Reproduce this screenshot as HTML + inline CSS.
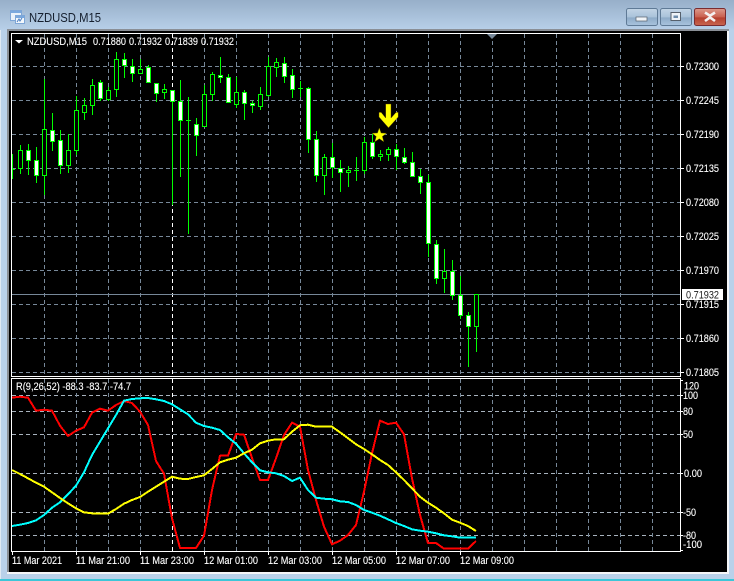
<!DOCTYPE html>
<html><head><meta charset="utf-8"><title>NZDUSD,M15</title>
<style>html,body{margin:0;padding:0;background:#b9d1ea;width:734px;height:581px;overflow:hidden}svg{display:block;position:absolute;left:0;top:0}text{font-family:"Liberation Sans",sans-serif;font-size:10.6px;fill:#fff;stroke:#fff;stroke-width:.12}</style></head>
<body>
<svg width="734" height="581" viewBox="0 0 734 581" xmlns="http://www.w3.org/2000/svg">
<defs>
<linearGradient id="tb" x1="0" y1="0" x2="0" y2="1"><stop offset="0" stop-color="#97afc9"/><stop offset="1" stop-color="#b8d0e9"/></linearGradient>
<linearGradient id="bb" x1="0" y1="0" x2="0" y2="1"><stop offset="0" stop-color="#c3d5e6"/><stop offset=".5" stop-color="#a9c2da"/><stop offset=".55" stop-color="#8eabc8"/><stop offset="1" stop-color="#a9c4de"/></linearGradient>
<linearGradient id="rb" x1="0" y1="0" x2="0" y2="1"><stop offset="0" stop-color="#dc9a8c"/><stop offset=".5" stop-color="#c9604f"/><stop offset=".55" stop-color="#b5402f"/><stop offset="1" stop-color="#c8654f"/></linearGradient>
</defs>
<rect width="734" height="581" fill="#b9d1ea"/>
<rect width="734" height="30" fill="url(#tb)"/>
<rect x="0" y="30" width="1" height="549" fill="#dfe9f3"/>
<rect x="0" y="579" width="734" height="2" fill="#3cc6d8"/>
<!-- title icon -->
<rect x="10.5" y="10.5" width="11" height="10" fill="#e8f1fa" stroke="#7ea6d6"/><rect x="11" y="11" width="10" height="2" fill="#79a8de"/>
<rect x="15.5" y="15.5" width="9" height="8" fill="#f4f8fc" stroke="#7ea6d6"/><rect x="16" y="16" width="8" height="2" fill="#79a8de"/>
<path d="M17 22l2-3 1 2 2-3" fill="none" stroke="#4c7fc0"/>
<text x="29" y="22" style="font-size:13px;fill:#16202f;stroke:none" textLength="72" lengthAdjust="spacingAndGlyphs">NZDUSD,M15</text>
<!-- buttons -->
<rect x="626.5" y="8.5" width="31" height="17" rx="2" fill="url(#bb)" stroke="#5f7a96"/>
<rect x="636" y="17" width="11" height="4" fill="#f0f4f8" stroke="#56606c" stroke-width=".7"/>
<rect x="660.5" y="8.5" width="31" height="17" rx="2" fill="url(#bb)" stroke="#5f7a96"/>
<rect x="671" y="12.5" width="9.5" height="8" fill="#eef3f8" stroke="#56606c"/><rect x="673.5" y="15.5" width="4.5" height="2.5" fill="#6d8cab"/>
<rect x="694.5" y="8.5" width="31" height="17" rx="2" fill="url(#rb)" stroke="#7a2c30"/>
<path d="M705 12.5l5 3.2 5-3.2M705 21l5-3.6 5 3.6" fill="none" stroke="#f4f1f1" stroke-width="2.6"/>
<!-- frame / black -->
<rect x="7" y="29" width="722" height="2" fill="#8a8f96"/>
<rect x="7" y="29" width="2" height="545" fill="#8a8f96"/>
<rect x="7" y="572" width="722" height="2" fill="#f4f6f8"/>
<rect x="727" y="31" width="2" height="543" fill="#f4f6f8"/>
<rect x="9" y="31" width="718" height="541" fill="#000"/>
<g shape-rendering="crispEdges">
<!-- main grid -->
<path d="M12 66.5H680M12 100.5H680M12 134.5H680M12 168.5H680M12 202.5H680M12 236.5H680M12 270.5H680M12 304.5H680M12 338.5H680M12 372.5H680" stroke="#778899" stroke-dasharray="4 3" fill="none"/>
<path d="M44.5 34V376M76.5 34V376M108.5 34V376M140.5 34V376M204.5 34V376M236.5 34V376M268.5 34V376M300.5 34V376M332.5 34V376M364.5 34V376M396.5 34V376M428.5 34V376M460.5 34V376M492.5 34V376M524.5 34V376M556.5 34V376M588.5 34V376M620.5 34V376M652.5 34V376" stroke="#778899" stroke-dasharray="4 3" fill="none"/>
<path d="M172.5 34V376" stroke="#fff" stroke-dasharray="4 3" fill="none"/>
<path d="M12 294.5H681" stroke="#778899" fill="none"/>
<!-- indicator grid -->
<path d="M12 395.5H680M12 411.5H680M12 434.5H680M12 473.5H680M12 512.5H680M12 535.5H680" stroke="#a7b2bd" stroke-dasharray="4 3" fill="none"/>
<path d="M44.5 379V551M76.5 379V551M108.5 379V551M140.5 379V551M204.5 379V551M236.5 379V551M268.5 379V551M300.5 379V551M332.5 379V551M364.5 379V551M396.5 379V551M428.5 379V551M460.5 379V551M492.5 379V551M524.5 379V551M556.5 379V551M588.5 379V551M620.5 379V551M652.5 379V551" stroke="#778899" stroke-dasharray="4 3" fill="none"/>
<path d="M172.5 379V551" stroke="#fff" stroke-dasharray="4 3" fill="none"/>
<!-- wicks -->
<path fill="none" stroke="#0f0" d="M12.5 154V179M20.5 145V174M28.5 144V175M36.5 147V183M44.5 79V195M52.5 113V151M60.5 130V174M68.5 134V173M76.5 96V155M84.5 98V120M92.5 79V115M100.5 80V101M108.5 87V101M116.5 52V97M124.5 53V78M132.5 59V82M140.5 59V74M148.5 65V83M156.5 83V102M164.5 84V99M172.5 90V205M180.5 80V177M188.5 97V234M196.5 118V156M204.5 85V127M212.5 72V101M220.5 57V83M228.5 74V103M236.5 77V108M244.5 90V120M252.5 101V113M260.5 87V110M268.5 57V97M276.5 58V77M284.5 57V83M292.5 69V98M300.5 81V97M308.5 87V153M316.5 131V182M324.5 154V195M332.5 143V178M340.5 160V192M348.5 166V187M356.5 157V181M364.5 137V174M372.5 134V159M380.5 150V161M388.5 147V161M396.5 144V170M404.5 148V164M412.5 152V177M420.5 169V194M428.5 175V257M436.5 240V284M444.5 249V293M452.5 260V300M460.5 276V319M468.5 312V367M476.5 294V352"/>
<!-- hollow bodies -->
<path fill="#000" stroke="#0f0" d="M18.5 150.5h4v18h-4zM42.5 129.5h4v46h-4zM66.5 150.5h4v15h-4zM74.5 110.5h4v40h-4zM82.5 105.5h4v7h-4zM90.5 85.5h4v20h-4zM106.5 90.5h4v9h-4zM114.5 59.5h4v30h-4zM138.5 69.5h4v4h-4zM162.5 89.5h4v3h-4zM202.5 94.5h4v32h-4zM210.5 74.5h4v20h-4zM234.5 92.5h4v12h-4zM258.5 94.5h4v12h-4zM266.5 66.5h4v29h-4zM274.5 62.5h4v5h-4zM322.5 157.5h4v18h-4zM346.5 170.5h4v2h-4zM362.5 142.5h4v28h-4zM378.5 154.5h4v2h-4zM386.5 149.5h4v5h-4zM442.5 271.5h4v7h-4zM474.5 294.5h4v32h-4z"/>
<!-- white bodies -->
<path fill="#fff" stroke="#0f0" d="M26.5 150.5h4v10h-4zM34.5 160.5h4v15h-4zM50.5 130.5h4v11h-4zM58.5 140.5h4v25h-4zM98.5 82.5h4v16h-4zM122.5 59.5h4v6h-4zM130.5 66.5h4v7h-4zM146.5 67.5h4v15h-4zM154.5 83.5h4v10h-4zM170.5 90.5h4v11h-4zM178.5 101.5h4v19h-4zM194.5 124.5h4v11h-4zM218.5 75.5h4v2h-4zM226.5 77.5h4v25h-4zM242.5 92.5h4v11h-4zM250.5 103.5h4v2h-4zM282.5 63.5h4v13h-4zM290.5 75.5h4v14h-4zM306.5 88.5h4v51h-4zM314.5 139.5h4v36h-4zM330.5 157.5h4v10h-4zM338.5 168.5h4v4h-4zM370.5 142.5h4v14h-4zM394.5 149.5h4v7h-4zM402.5 157.5h4v5h-4zM410.5 162.5h4v14h-4zM418.5 176.5h4v6h-4zM426.5 182.5h4v61h-4zM434.5 244.5h4v34h-4zM450.5 271.5h4v24h-4zM458.5 295.5h4v20h-4zM466.5 315.5h4v11h-4z"/>
<!-- doji -->
<path fill="none" stroke="#0f0" d="M12 169.5h3M186 120.5h5M298 88.5h5M354 170.5h5"/>
<!-- borders -->
<path fill="none" stroke="#fff" d="M11.5 33.5H680.5V376.5H11.5ZM11.5 378.5H680.5V551.5H11.5Z"/>
<!-- ticks -->
<path fill="none" stroke="#fff" d="M681 66.5h3M681 100.5h3M681 134.5h3M681 168.5h3M681 202.5h3M681 236.5h3M681 270.5h3M681 304.5h3M681 338.5h3M681 372.5h3M681 380.5h2M681 395.5h2M681 411.5h2M681 434.5h2M681 473.5h2M681 512.5h2M681 535.5h2M681 550.5h2M12.5 552v3M76.5 552v3M140.5 552v3M204.5 552v3M268.5 552v3M332.5 552v3M396.5 552v3M460.5 552v3"/>
</g>
<!-- triangles -->
<path d="M487 34h10l-5 5z" fill="#778899"/>
<path d="M15 40h8l-4 3.5z" fill="#fff"/>
<!-- indicator lines -->
<g fill="none" stroke-width="2" stroke-linejoin="round" shape-rendering="crispEdges">
<polyline stroke="#f00" points="12,397.7 20,396.7 28,397.7 36,410.7 44,409.7 52,410.7 60,425.7 68,436 76,430.7 84,427.3 92,412.7 100,408.7 108,410.7 116,405 124,401 132,403 140,411.7 148,425 156,461 164,473.7 172,518.3 180,548 188,548 196,548 204,535.7 212,490 220,455.7 228,455.7 236,434 244,434.7 252,458 260,480 268,480 276,458.3 284,435 292,422.7 300,426.7 308,470 316,500 324,526.7 332,544.3 340,540.7 348,535 356,525 364,491.7 372,453.3 380,420.7 388,424 396,422.7 404,434.3 412,478.3 420,515 428,543 436,543 444,548.7 452,548.7 460,548.7 468,548.7 476,541"/>
<polyline stroke="#0ff" points="12,526 20,524.7 28,523 36,520.3 44,515 52,507.7 60,502.3 68,494.3 76,485.7 84,472.3 92,455 100,441.7 108,428.3 116,415 124,400.7 132,399 140,398.3 148,398 156,399.3 164,401 172,404.3 180,409.3 188,414.3 196,422.7 204,426 212,427.7 220,430 228,437.3 236,443.7 244,453.3 252,462.3 260,470.3 268,472.3 276,473.3 284,476 292,481 300,477.7 308,490 316,497.7 324,498.7 332,499.3 340,501.3 348,502 356,505 364,510 372,512.7 380,515.7 388,519.3 396,523 404,526 412,529.3 420,530.7 428,531.7 436,533.3 444,535.3 452,536.3 460,537.7 468,537.7 476,537.7"/>
<polyline stroke="#ff0" points="12,470 20,474 28,478.3 36,482.7 44,486.7 52,492.3 60,498 68,503.3 76,508.3 84,512.3 92,513.3 100,513.7 108,513.7 116,509 124,503.7 132,500 140,497 148,491.7 156,486.7 164,481.7 172,476.7 180,478.7 188,479 196,477 204,475.3 212,469 220,462.3 228,459.7 236,457.7 244,453.3 252,449.7 260,443.3 268,440.7 276,439.3 284,439.3 292,431.7 300,425.3 308,424.7 316,426.7 324,426.7 332,426.7 340,432.3 348,438.3 356,444.3 364,449 372,454.3 380,460 388,465 396,472.3 404,480 412,488.3 420,496.7 428,502.7 436,507.7 444,513.3 452,519.7 460,522.7 468,526 476,531"/>
</g>
<!-- arrow and star -->
<path d="M385.7 104h5.3v14l5-5.6h2.2v4.6l-9.7 10.8-9.5-10.8v-4.6h2.2l4.5 5.6z" fill="#ff0" stroke="#5a3a00" stroke-width=".4"/>
<path d="M379.3 128l1.8 5 5.4.2-4.2 3.3 1.5 5.2-4.5-3-4.5 3 1.5-5.2-4.2-3.3 5.4-.2z" fill="#ff0" stroke="#6a5a00" stroke-width=".4"/>
<!-- chart labels -->
<text x="27" y="45" textLength="60" lengthAdjust="spacingAndGlyphs">NZDUSD,M15</text>
<text x="93" y="45" textLength="33" lengthAdjust="spacingAndGlyphs">0.71880</text>
<text x="129" y="45" textLength="33" lengthAdjust="spacingAndGlyphs">0.71932</text>
<text x="165" y="45" textLength="33" lengthAdjust="spacingAndGlyphs">0.71839</text>
<text x="201" y="45" textLength="33" lengthAdjust="spacingAndGlyphs">0.71932</text>
<text x="16" y="390" textLength="115" lengthAdjust="spacingAndGlyphs">R(9,26,52) -88.3 -83.7 -74.7</text>
<!-- price axis -->
<text x="686" y="70" textLength="33" lengthAdjust="spacingAndGlyphs">0.72300</text>
<text x="686" y="104" textLength="33" lengthAdjust="spacingAndGlyphs">0.72245</text>
<text x="686" y="138" textLength="33" lengthAdjust="spacingAndGlyphs">0.72190</text>
<text x="686" y="172" textLength="33" lengthAdjust="spacingAndGlyphs">0.72135</text>
<text x="686" y="206" textLength="33" lengthAdjust="spacingAndGlyphs">0.72080</text>
<text x="686" y="240" textLength="33" lengthAdjust="spacingAndGlyphs">0.72025</text>
<text x="686" y="274" textLength="33" lengthAdjust="spacingAndGlyphs">0.71970</text>
<text x="686" y="308" textLength="33" lengthAdjust="spacingAndGlyphs">0.71915</text>
<text x="686" y="342" textLength="33" lengthAdjust="spacingAndGlyphs">0.71860</text>
<text x="686" y="376" textLength="33" lengthAdjust="spacingAndGlyphs">0.71805</text>
<rect x="682" y="289" width="41" height="11" fill="#fff"/>
<text x="686" y="298.5" textLength="33" lengthAdjust="spacingAndGlyphs" style="fill:#1a1a1a;stroke:none">0.71932</text>
<!-- indicator axis -->
<text x="684" y="389.5" textLength="15" lengthAdjust="spacingAndGlyphs">120</text>
<text x="683" y="399" textLength="15" lengthAdjust="spacingAndGlyphs">100</text>
<text x="683" y="415" textLength="10" lengthAdjust="spacingAndGlyphs">80</text>
<text x="683" y="438" textLength="10" lengthAdjust="spacingAndGlyphs">50</text>
<text x="684" y="477" textLength="18" lengthAdjust="spacingAndGlyphs">0.00</text>
<text x="683" y="516" textLength="13" lengthAdjust="spacingAndGlyphs">-50</text>
<text x="683" y="539" textLength="13" lengthAdjust="spacingAndGlyphs">-80</text>
<text x="683" y="548" textLength="19" lengthAdjust="spacingAndGlyphs">-100</text>
<!-- time axis -->
<text x="12" y="564" textLength="50" lengthAdjust="spacingAndGlyphs">11 Mar 2021</text>
<text x="76" y="564" textLength="54" lengthAdjust="spacingAndGlyphs">11 Mar 21:00</text>
<text x="140" y="564" textLength="54" lengthAdjust="spacingAndGlyphs">11 Mar 23:00</text>
<text x="204" y="564" textLength="54" lengthAdjust="spacingAndGlyphs">12 Mar 01:00</text>
<text x="268" y="564" textLength="54" lengthAdjust="spacingAndGlyphs">12 Mar 03:00</text>
<text x="332" y="564" textLength="54" lengthAdjust="spacingAndGlyphs">12 Mar 05:00</text>
<text x="396" y="564" textLength="54" lengthAdjust="spacingAndGlyphs">12 Mar 07:00</text>
<text x="460" y="564" textLength="54" lengthAdjust="spacingAndGlyphs">12 Mar 09:00</text>
</svg>
</body></html>
